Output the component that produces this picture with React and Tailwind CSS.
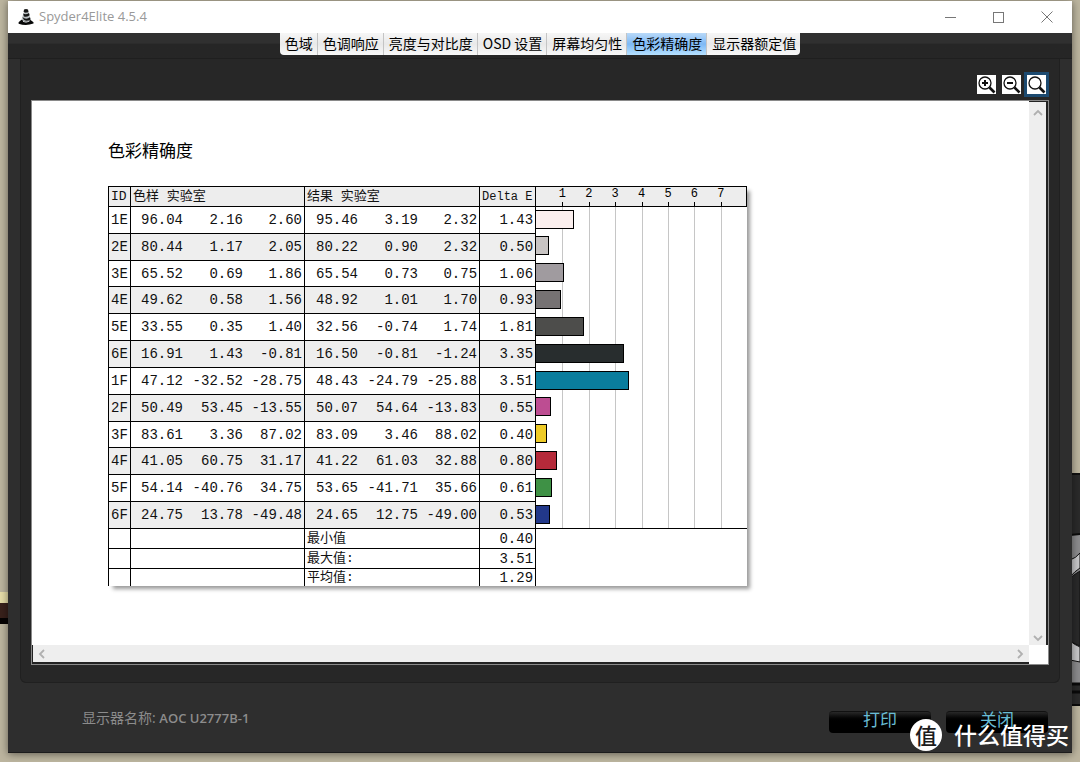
import React from "react";

const tabs = ["色域", "色调响应", "亮度与对比度", "OSD 设置", "屏幕均匀性", "色彩精确度", "显示器额定值"];

const rows = [
  ["1E", "96.04", "2.16", "2.60", "95.46", "3.19", "2.32", "1.43", "#fbefee"],
  ["2E", "80.44", "1.17", "2.05", "80.22", "0.90", "2.32", "0.50", "#c8c4c3"],
  ["3E", "65.52", "0.69", "1.86", "65.54", "0.73", "0.75", "1.06", "#a09b9f"],
  ["4E", "49.62", "0.58", "1.56", "48.92", "1.01", "1.70", "0.93", "#767273"],
  ["5E", "33.55", "0.35", "1.40", "32.56", "-0.74", "1.74", "1.81", "#4d4d4b"],
  ["6E", "16.91", "1.43", "-0.81", "16.50", "-0.81", "-1.24", "3.35", "#282d2e"],
  ["1F", "47.12", "-32.52", "-28.75", "48.43", "-24.79", "-25.88", "3.51", "#0a7d9d"],
  ["2F", "50.49", "53.45", "-13.55", "50.07", "54.64", "-13.83", "0.55", "#bd4d92"],
  ["3F", "83.61", "3.36", "87.02", "83.09", "3.46", "88.02", "0.40", "#eecb27"],
  ["4F", "41.05", "60.75", "31.17", "41.22", "61.03", "32.88", "0.80", "#b52a3a"],
  ["5F", "54.14", "-40.76", "34.75", "53.65", "-41.71", "35.66", "0.61", "#3e9145"],
  ["6F", "24.75", "13.78", "-49.48", "24.65", "12.75", "-49.00", "0.53", "#22388a"],
];

const summary = [
  ["最小值", "0.40"],
  ["最大值:", "3.51"],
  ["平均值:", "1.29"],
];

function Desktop() {
  return (
    <div className="absolute inset-0 overflow-hidden bg-[#bcb59f]">
      <svg className="absolute left-0 top-0" width="10" height="762" aria-hidden="true">
        <rect y="592" width="10" height="11" fill="#e6dda8" />
        <rect y="603" width="10" height="15" fill="#38211b" />
        <rect y="618" width="10" height="6" fill="#050303" />
      </svg>
      <svg className="absolute right-0 top-0" width="10" height="762" aria-hidden="true">
        <rect y="474" width="10" height="232" fill="#2b2b2b" />
        <path d="M0 474h10" stroke="#111" strokeWidth="2" />
        <path d="M0 535L10 534V683H0z" fill="#8c8c8e" />
        <path d="M0 535L10 534" stroke="#0c0c0c" strokeWidth="2" />
        <path d="M0 560Q6 558 10 553V568Q5 571 0 577z" fill="#c9c9cb" stroke="#111" />
        <path d="M0 578Q5 574 10 571V646Q5 644 0 641z" fill="#2a2a2b" stroke="#111" />
        <path d="M0 641Q5 645 10 647V662Q5 661 0 660z" fill="#c9c9cb" stroke="#111" />
        <path d="M0 684H10M0 692H10" stroke="#0a0a0a" strokeWidth="3" />
        <path d="M0 705H10" stroke="#0a0a0a" strokeWidth="2" />
      </svg>
    </div>
  );
}

function AppIcon() {
  return (
    <svg width="16" height="18" viewBox="0 0 16 18" aria-hidden="true">
      <path d="M6 1.6Q8 .2 10 1.6L10.6 4.2Q8 5.6 5.6 4z" fill="#151515" />
      <path d="M5.4 5.2L10.8 4.6 13 13H3.2z" fill="#b9bfc2" />
      <path d="M5.2 5.6Q8 7.2 11 5L11.6 7.2Q8 9.6 5.8 8.2M4.4 9Q8 12.2 12 9.2L12.6 11.4Q9 13.6 6 12z" fill="#151515" />
      <path d="M.6 14.2L3.4 11.8Q8 15 12.6 12L15.5 14.2V15.6Q8 18.4.6 15.8z" fill="#080808" />
      <path d="M5 13.4Q8 15 11.4 13.2" fill="none" stroke="#cfd3d5" />
    </svg>
  );
}

function Magnifier({ sign }) {
  return (
    <svg width="19" height="19" viewBox="0 0 19 19" fill="none" stroke="#111" aria-hidden="true">
      <circle cx="8" cy="8" r="6" strokeWidth="1.3" />
      <path d="M12.5 12.5L17.5 17.5" strokeWidth="2.6" />
      {sign && <path d="M5 8H11" strokeWidth="2" />}
      {sign === "plus" && <path d="M8 5V11" strokeWidth="2" />}
    </svg>
  );
}

function Chevron({ d }) {
  return (
    <svg width="10" height="10" viewBox="0 0 10 10" fill="none" stroke="#b0b0b0" strokeWidth="1.8" aria-hidden="true">
      <path d={d} />
    </svg>
  );
}

function DeltaChart() {
  const unit = 26.4;
  const step = 322 / 12;
  return (
    <svg width="211" height="343" viewBox="0 0 211 343" shapeRendering="crispEdges" role="img" aria-label="Delta E">
      <rect x="-1" y="0.5" width="211.5" height="20" fill="#ededed" stroke="#000" />
      {[1, 2, 3, 4, 5, 6, 7].map((n) => (
        <g key={n}>
          <path d={`M${Math.round(n * unit) + 0.5} 21V342`} stroke="#c6c6c6" />
          <path d={`M${Math.round(n * unit) + 0.5} 16V20`} stroke="#000" />
          <text x={n * unit} y="11" textAnchor="middle" className="font-['Liberation_Mono',monospace] text-[12px]">
            {n}
          </text>
        </g>
      ))}
      {rows.map((r, i) => (
        <rect
          key={r[0]}
          x="-0.5"
          y={Math.round(23.6 + i * step) + 0.5}
          width={Math.round(Number(r[7]) * unit)}
          height="18"
          fill={r[8]}
          stroke="#000"
        />
      ))}
      <path d="M0 342.5H211" stroke="#000" />
    </svg>
  );
}

function ResultTable() {
  const num = "text-right pr-0.5 py-0";
  return (
    <table className="h-[400px] w-[428px] shrink-0 table-fixed border-separate border-spacing-0 border-l border-black font-['Liberation_Mono','Noto_Sans_CJK_SC',monospace] text-[14px] leading-4 text-[#111]">
      <colgroup>
        <col className="w-[22px]" />
        <col className="w-[54px]" />
        <col className="w-[60px]" />
        <col className="w-[60px]" />
        <col className="w-[55px]" />
        <col className="w-[60px]" />
        <col className="w-[60px]" />
        <col className="w-[56px]" />
      </colgroup>
      <thead>
        <tr className="h-[21px] bg-[#ededed] text-left text-[13px] [&>th]:border-y [&>th]:border-r [&>th]:border-black [&>th]:p-0 [&>th]:pl-0.5 [&>th]:font-normal [&>th]:whitespace-nowrap">
          <th>ID</th>
          <th colSpan={3}>色样 实验室</th>
          <th colSpan={3}>结果 实验室</th>
          <th className="text-[12px]">Delta E</th>
        </tr>
      </thead>
      <tbody>
        {rows.map((r) => (
          <tr key={r[0]} className="even:bg-[#eeeeee] [&>td]:border-b [&>td]:border-black">
            <td className="border-r p-0 text-center">{r[0]}</td>
            <td className={num}>{r[1]}</td>
            <td className={num}>{r[2]}</td>
            <td className={num + " border-r"}>{r[3]}</td>
            <td className={num}>{r[4]}</td>
            <td className={num}>{r[5]}</td>
            <td className={num + " border-r"}>{r[6]}</td>
            <td className={num + " border-r"}>{r[7]}</td>
          </tr>
        ))}
      </tbody>
      <tfoot>
        {summary.map((s) => (
          <tr key={s[0]} className="h-5 last:h-[17px] [&>td]:border-r [&>td]:border-b [&>td]:border-black last:[&>td]:border-b-0">
            <td className="p-0" />
            <td className="p-0" colSpan={3} />
            <td className="p-0 pl-0.5 text-[13px]" colSpan={3}>{s[0]}</td>
            <td className={num}>{s[1]}</td>
          </tr>
        ))}
      </tfoot>
    </table>
  );
}

export default function App() {
  return (
    <div className="relative flex min-h-screen flex-col px-2 pt-px pb-[9px] font-['Open_Sans','Noto_Sans_CJK_SC',sans-serif]">
      <Desktop />
      <div className="relative flex flex-1 flex-col border-b border-[#1c1c1c] bg-[#2e2e2e] shadow-[0_1px_8px_rgba(0,0,0,0.5)]">
        <header className="flex h-8 items-center bg-white pl-[10px]">
          <AppIcon />
          <h1 className="ml-[5px] flex-1 text-[13px] text-[#999]">Spyder4Elite 4.5.4</h1>
          <div className="flex text-[#777]">
            <button aria-label="最小化" className="flex h-8 w-12 items-center justify-center">
              <svg width="11" height="11" stroke="currentColor" fill="none"><path d="M0 5.5H11" /></svg>
            </button>
            <button aria-label="最大化" className="flex h-8 w-12 items-center justify-center">
              <svg width="11" height="11" stroke="currentColor" fill="none"><rect x=".5" y=".5" width="10" height="10" /></svg>
            </button>
            <button aria-label="关闭窗口" className="flex h-8 w-[50px] items-center justify-center">
              <svg width="12" height="12" stroke="currentColor" fill="none"><path d="M.5 .5L11.5 11.5M11.5 .5L.5 11.5" /></svg>
            </button>
          </div>
        </header>

        <nav className="flex h-[26px] justify-center border-b border-[#1f1f1f] bg-linear-to-b from-[#303030] from-40% to-[#262626] to-45%">
          <div className="flex h-[22px] overflow-hidden rounded-b bg-linear-to-b from-[#f6f6f6] via-[#e9e9e9] to-[#f8f8f8] font-['Noto_Sans_CJK_SC',sans-serif]">
            {tabs.map((t) => (
              <button
                key={t}
                className={
                  "border-r border-[#c4c4c4] pr-1 pb-0.5 pl-[5px] text-[14px] leading-5 whitespace-nowrap text-black last:border-r-0 " +
                  (t === "色彩精确度" ? "bg-linear-to-b from-[#b9d9f8] via-[#7db9f5] to-[#b5e0ff]" : "")
                }
              >
                {t}
              </button>
            ))}
          </div>
        </nav>

        <main className="mx-3 flex flex-1 flex-col rounded-b-md border-x border-b border-[#202020] bg-[#272727] pr-[10px] pb-[17px] pl-[10px]">
          <div className="flex h-[41px] items-end justify-end pb-[3px]">
            <button aria-label="放大" className="border-[3px] border-transparent"><span className="block bg-white"><Magnifier sign="plus" /></span></button>
            <button aria-label="缩小" className="border-[3px] border-transparent"><span className="block bg-white"><Magnifier sign="minus" /></span></button>
            <button aria-label="适合窗口" className="border-[3px] border-[#1c4a70]"><span className="block bg-white"><Magnifier /></span></button>
          </div>

          <div className="grid flex-1 grid-cols-[1fr_19px] grid-rows-[1fr_19px] border border-[#8a8a8a] bg-white">
            <section className="pt-[38px] pl-[76px]">
              <h2 className="text-[17px] leading-6 text-black">色彩精确度</h2>
              <div className="mt-[23px] flex w-[639px] items-start bg-white shadow-[4px_4px_4px_-1px_rgba(0,0,0,0.4)]">
                <ResultTable />
                <DeltaChart />
              </div>
            </section>
            <div className="flex flex-col items-center justify-between border-t border-r-2 border-[#222] bg-[#eeeeee] pt-1.5 pb-0.5">
              <button aria-label="向上滚动"><Chevron d="M1 7L5 3L9 7" /></button>
              <button aria-label="向下滚动"><Chevron d="M1 3L5 7L9 3" /></button>
            </div>
            <div className="flex items-center justify-between border-b-2 border-l border-[#222] bg-[#eeeeee] px-1">
              <button aria-label="向左滚动"><Chevron d="M7 1L3 5L7 9" /></button>
              <button aria-label="向右滚动"><Chevron d="M3 1L7 5L3 9" /></button>
            </div>
          </div>
        </main>

        <footer className="flex h-[69px] items-center pr-6 pl-[74px]">
          <p className="flex-1 text-[14px] text-[#8c8c8c]">
            显示器名称: <b className="text-[13px] font-semibold">AOC U2777B-1</b>
          </p>
          <div className="flex gap-[15px]">
            {["打印", "关闭"].map((t) => (
              <button
                key={t}
                className="mt-2 h-[22px] w-[102px] rounded-sm border-t border-[#111] bg-linear-to-b from-[#292929] to-black to-50% pb-1 text-[17px] leading-4 text-[#68bcd4]"
              >
                {t}
              </button>
            ))}
          </div>
        </footer>
      </div>

      <div className="absolute right-[11px] bottom-[11px] flex items-center gap-3 text-white">
        <span className="flex size-8 items-center justify-center rounded-full bg-white text-[22px] leading-6 font-medium text-[#1c1c1c]">值</span>
        <span className="text-[23px] leading-8 font-medium">什么值得买</span>
      </div>
    </div>
  );
}
